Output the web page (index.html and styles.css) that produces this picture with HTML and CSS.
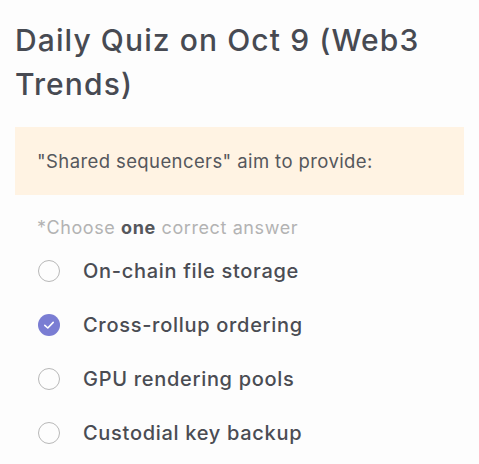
FILE: index.html
```html
<!DOCTYPE html>
<html>
<head>
<meta charset="utf-8">
<link rel="stylesheet" href="styles.css">
</head>
<body>
<div class="quiz">
  <h1 class="title">Daily Quiz on Oct 9 (Web3 Trends)</h1>
  <div class="question">"Shared sequencers" aim to provide:</div>
  <div class="hint">*Choose <b>one</b> correct answer</div>
  <ul class="options">
    <li class="option"><span class="radio"></span><span>On-chain file storage</span></li>
    <li class="option"><span class="radio checked"><svg viewBox="0 0 22 22" width="22" height="22"><circle cx="11" cy="11" r="11" fill="#7a7dd3"/><path d="M6.8 11.3 L9.8 14 L15.2 8.4" fill="none" stroke="#fff" stroke-width="1.6" stroke-linecap="round" stroke-linejoin="round"/></svg></span><span>Cross-rollup ordering</span></li>
    <li class="option"><span class="radio"></span><span>GPU rendering pools</span></li>
    <li class="option"><span class="radio"></span><span>Custodial key backup</span></li>
  </ul>
</div>
</body>
</html>
```

FILE: styles.css
```css
html, body {
  margin: 0;
  padding: 0;
  background: #fdfdfd;
}
body {
  font-family: Inter, "Noto Sans", sans-serif;
  color: #474a52;
}
.quiz {
  padding: 18px 15px 0 15px;
}
.title {
  margin: 0;
  font-size: 30px;
  line-height: 44px;
  font-weight: 500;
  color: #474a52;
  letter-spacing: 1.1px;
  padding-right: 20px;
}
.question {
  margin-top: 21px;
  background: #fff3e3;
  height: 68px;
  box-sizing: border-box;
  padding: 0 22px;
  display: flex;
  align-items: center;
  font-size: 18.5px;
  letter-spacing: 0.4px;
  color: #55575c;
}
.hint {
  margin-top: 22px;
  padding-left: 22px;
  font-size: 18px;
  letter-spacing: 0.6px;
  color: #b3b3b3;
}
.hint b {
  font-weight: 700;
  color: #55575c;
}
.options {
  list-style: none;
  margin: 6px 0 0 0;
  padding: 0;
}
.option {
  display: flex;
  align-items: center;
  height: 54px;
  font-size: 20px;
  letter-spacing: 0.7px;
  color: #4a4c53;
  font-weight: 500;
}
.radio {
  width: 22px;
  height: 22px;
  box-sizing: border-box;
  border: 1.5px solid #b8b8b8;
  border-radius: 50%;
  margin-left: 23px;
  margin-right: 23px;
  flex: none;
}
.radio.checked {
  border: none;
  display: flex;
}
```
